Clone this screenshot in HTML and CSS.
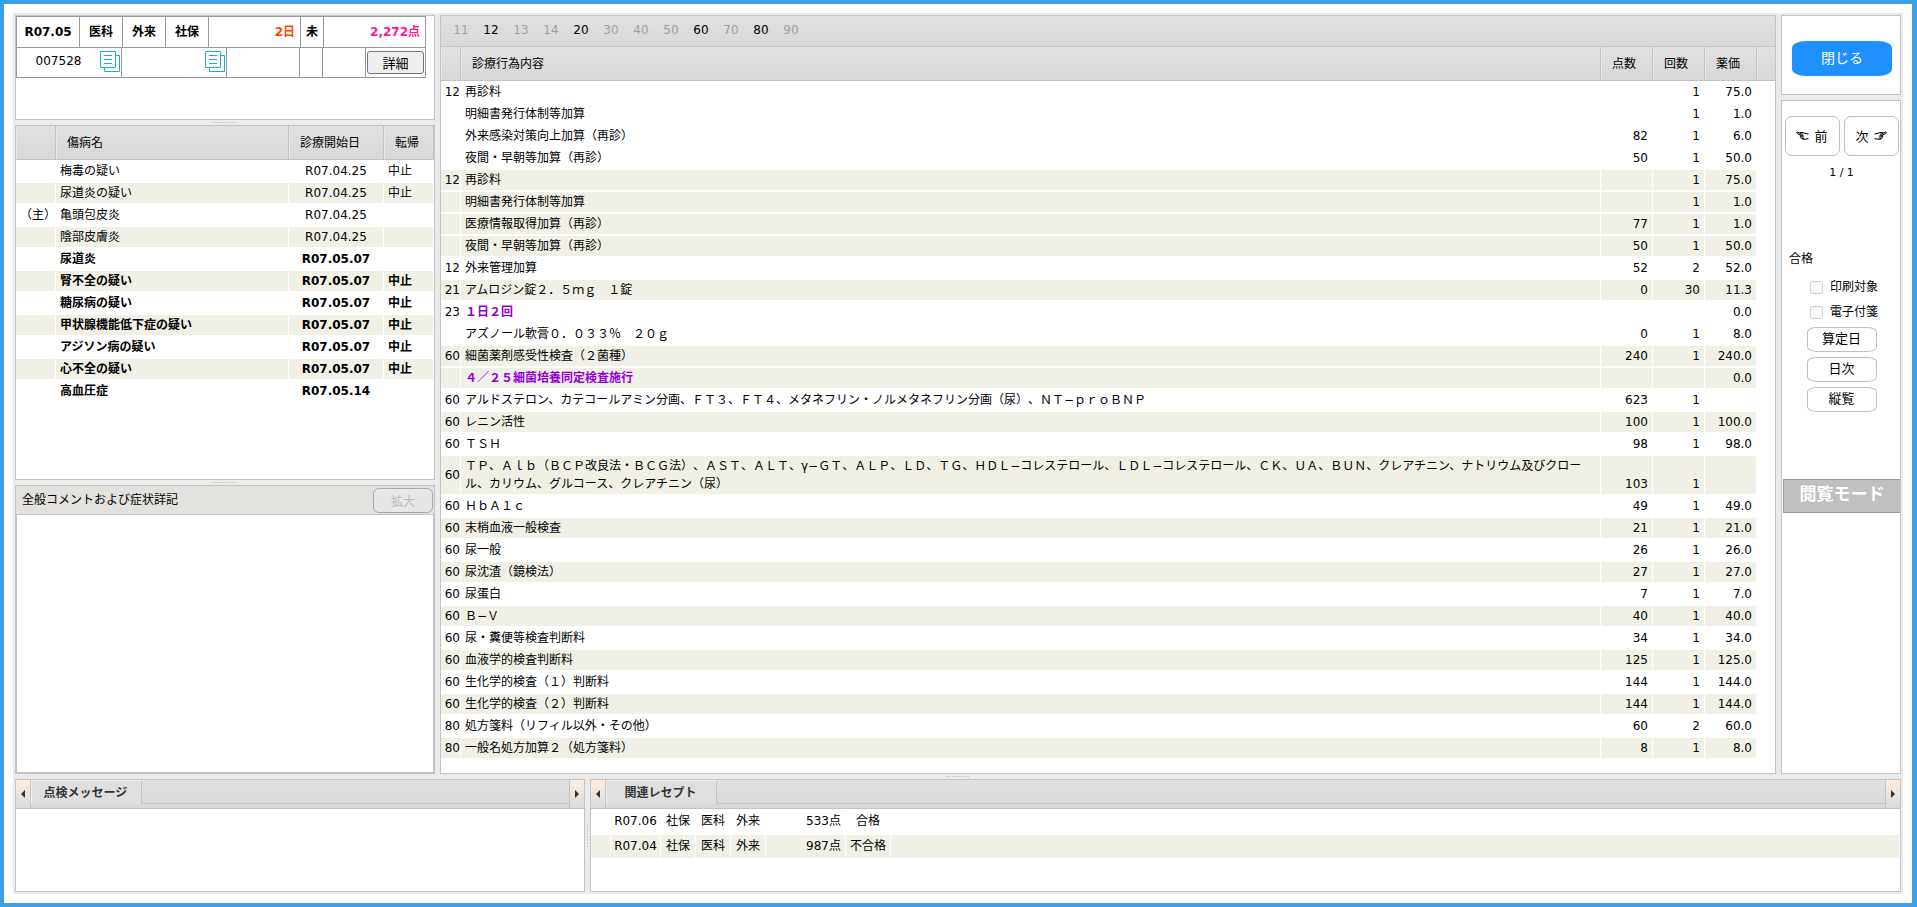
FILE: index.html
```html
<!DOCTYPE html>
<html lang="ja">
<head>
    <meta charset="UTF-8">
    <meta name="viewport" content="width=device-width, initial-scale=1.0">
    <title>レセプト点検</title>
    <link rel="stylesheet" href="styles.css">
</head>
<body>
    <div class="layout">
        <div class="upper">
            <div class="left-column">
                <section class="panel info-panel">
                    <table class="info-table summary">
                        <tr>
                            <td class="w-month">R07.05</td>
                            <td class="w-kind">医科</td>
                            <td class="w-kind">外来</td>
                            <td class="w-kind">社保</td>
                            <td class="days">2日</td>
                            <td class="w-mark">未</td>
                            <td class="points">2,272点</td>
                        </tr>
                    </table>
                    <table class="info-table patient">
                        <tr>
                            <td class="w-id">
                                <div class="copy-cell">
                                    <span class="patient-id">007528</span>
                                    <svg class="copy-icon" viewBox="0 0 20 21" fill="#fff" stroke="#17b1ca">
                                        <path d="M4.5 4.5h15v16h-15z"/>
                                        <path d="M.5.5h15v16H.5z"/>
                                        <path d="M4 4.5h8M4 8.5h8M4 12.5h8"/>
                                    </svg>
                                </div>
                            </td>
                            <td class="w-id">
                                <div class="copy-cell">
                                    <span class="patient-id"></span>
                                    <svg class="copy-icon" viewBox="0 0 20 21" fill="#fff" stroke="#17b1ca">
                                        <path d="M4.5 4.5h15v16h-15z"/>
                                        <path d="M.5.5h15v16H.5z"/>
                                        <path d="M4 4.5h8M4 8.5h8M4 12.5h8"/>
                                    </svg>
                                </div>
                            </td>
                            <td></td>
                            <td class="w-mark"></td>
                            <td class="w-kind"></td>
                            <td class="w-detail"><button type="button" class="detail-button">詳細</button></td>
                        </tr>
                    </table>
                </section>
                <div class="splitter"></div>
                <section class="panel disease-panel">
                    <table class="grid disease">
                        <colgroup>
                            <col class="c-main"><col><col class="c-date"><col class="c-outcome">
                        </colgroup>
                        <thead>
                            <tr><th></th><th>傷病名</th><th>診療開始日</th><th>転帰</th></tr>
                        </thead>
                        <tbody>
                            <tr><td></td><td>梅毒の疑い</td><td>R07.04.25</td><td>中止</td></tr>
                            <tr><td></td><td>尿道炎の疑い</td><td>R07.04.25</td><td>中止</td></tr>
                            <tr><td>（主）</td><td>亀頭包皮炎</td><td>R07.04.25</td><td></td></tr>
                            <tr><td></td><td>陰部皮膚炎</td><td>R07.04.25</td><td></td></tr>
                            <tr class="new"><td></td><td>尿道炎</td><td>R07.05.07</td><td></td></tr>
                            <tr class="new"><td></td><td>腎不全の疑い</td><td>R07.05.07</td><td>中止</td></tr>
                            <tr class="new"><td></td><td>糖尿病の疑い</td><td>R07.05.07</td><td>中止</td></tr>
                            <tr class="new"><td></td><td>甲状腺機能低下症の疑い</td><td>R07.05.07</td><td>中止</td></tr>
                            <tr class="new"><td></td><td>アジソン病の疑い</td><td>R07.05.07</td><td>中止</td></tr>
                            <tr class="new"><td></td><td>心不全の疑い</td><td>R07.05.07</td><td>中止</td></tr>
                            <tr class="new"><td></td><td>高血圧症</td><td>R07.05.14</td><td></td></tr>
                        </tbody>
                    </table>
                </section>
                <div class="splitter"></div>
                <section class="panel comment-panel">
                    <div class="comment-header">
                        <label for="comment">全般コメントおよび症状詳記</label>
                        <button type="button" class="expand-button" disabled>拡大</button>
                    </div>
                    <textarea id="comment" readonly></textarea>
                </section>
            </div>

            <section class="panel main-panel">
                <nav class="codes">
                    <span>11</span>
                    <a href="#c12">12</a>
                    <span>13</span>
                    <span>14</span>
                    <a href="#c20">20</a>
                    <span>30</span>
                    <span>40</span>
                    <span>50</span>
                    <a href="#c60">60</a>
                    <span>70</span>
                    <a href="#c80">80</a>
                    <span>90</span>
                </nav>
                <table class="grid acts">
                    <colgroup>
                        <col class="c-code"><col><col class="c-num"><col class="c-num"><col class="c-num"><col class="c-rest">
                    </colgroup>
                    <thead>
                        <tr><th></th><th>診療行為内容</th><th>点数</th><th>回数</th><th>薬価</th><th></th></tr>
                    </thead>
                    <tbody id="c12">
                        <tr><td>12</td><td>再診料</td><td></td><td>1</td><td>75.0</td></tr>
                        <tr><td></td><td>明細書発行体制等加算</td><td></td><td>1</td><td>1.0</td></tr>
                        <tr><td></td><td>外来感染対策向上加算（再診）</td><td>82</td><td>1</td><td>6.0</td></tr>
                        <tr><td></td><td>夜間・早朝等加算（再診）</td><td>50</td><td>1</td><td>50.0</td></tr>
                    </tbody>
                    <tbody>
                        <tr><td>12</td><td>再診料</td><td></td><td>1</td><td>75.0</td></tr>
                        <tr><td></td><td>明細書発行体制等加算</td><td></td><td>1</td><td>1.0</td></tr>
                        <tr><td></td><td>医療情報取得加算（再診）</td><td>77</td><td>1</td><td>1.0</td></tr>
                        <tr><td></td><td>夜間・早朝等加算（再診）</td><td>50</td><td>1</td><td>50.0</td></tr>
                    </tbody>
                    <tbody>
                        <tr><td>12</td><td>外来管理加算</td><td>52</td><td>2</td><td>52.0</td></tr>
                    </tbody>
                    <tbody id="c20">
                        <tr><td>21</td><td>アムロジン錠２．５ｍｇ　１錠</td><td>0</td><td>30</td><td>11.3</td></tr>
                    </tbody>
                    <tbody>
                        <tr><td>23</td><td class="note">１日２回</td><td></td><td></td><td>0.0</td></tr>
                        <tr><td></td><td>アズノール軟膏０．０３３％　２０ｇ</td><td>0</td><td>1</td><td>8.0</td></tr>
                    </tbody>
                    <tbody id="c60">
                        <tr><td>60</td><td>細菌薬剤感受性検査（２菌種）</td><td>240</td><td>1</td><td>240.0</td></tr>
                        <tr><td></td><td class="note">４／２５細菌培養同定検査施行</td><td></td><td></td><td>0.0</td></tr>
                    </tbody>
                    <tbody>
                        <tr><td>60</td><td>アルドステロン、カテコールアミン分画、ＦＴ３、ＦＴ４、メタネフリン・ノルメタネフリン分画（尿）、ＮＴ−ｐｒｏＢＮＰ</td><td>623</td><td>1</td><td></td></tr>
                    </tbody>
                    <tbody>
                        <tr><td>60</td><td>レニン活性</td><td>100</td><td>1</td><td>100.0</td></tr>
                    </tbody>
                    <tbody>
                        <tr><td>60</td><td>ＴＳＨ</td><td>98</td><td>1</td><td>98.0</td></tr>
                    </tbody>
                    <tbody>
                        <tr><td>60</td><td>ＴＰ、Ａｌｂ（ＢＣＰ改良法・ＢＣＧ法）、ＡＳＴ、ＡＬＴ、γ−ＧＴ、ＡＬＰ、ＬＤ、ＴＧ、ＨＤＬ−コレステロール、ＬＤＬ−コレステロール、ＣＫ、ＵＡ、ＢＵＮ、クレアチニン、ナトリウム及びクロール、カリウム、グルコース、クレアチニン（尿）</td><td>103</td><td>1</td><td></td></tr>
                    </tbody>
                    <tbody>
                        <tr><td>60</td><td>ＨｂＡ１ｃ</td><td>49</td><td>1</td><td>49.0</td></tr>
                    </tbody>
                    <tbody>
                        <tr><td>60</td><td>末梢血液一般検査</td><td>21</td><td>1</td><td>21.0</td></tr>
                    </tbody>
                    <tbody>
                        <tr><td>60</td><td>尿一般</td><td>26</td><td>1</td><td>26.0</td></tr>
                    </tbody>
                    <tbody>
                        <tr><td>60</td><td>尿沈渣（鏡検法）</td><td>27</td><td>1</td><td>27.0</td></tr>
                    </tbody>
                    <tbody>
                        <tr><td>60</td><td>尿蛋白</td><td>7</td><td>1</td><td>7.0</td></tr>
                    </tbody>
                    <tbody>
                        <tr><td>60</td><td>Ｂ−Ｖ</td><td>40</td><td>1</td><td>40.0</td></tr>
                    </tbody>
                    <tbody>
                        <tr><td>60</td><td>尿・糞便等検査判断料</td><td>34</td><td>1</td><td>34.0</td></tr>
                    </tbody>
                    <tbody>
                        <tr><td>60</td><td>血液学的検査判断料</td><td>125</td><td>1</td><td>125.0</td></tr>
                    </tbody>
                    <tbody>
                        <tr><td>60</td><td>生化学的検査（１）判断料</td><td>144</td><td>1</td><td>144.0</td></tr>
                    </tbody>
                    <tbody>
                        <tr><td>60</td><td>生化学的検査（２）判断料</td><td>144</td><td>1</td><td>144.0</td></tr>
                    </tbody>
                    <tbody id="c80">
                        <tr><td>80</td><td>処方箋料（リフィル以外・その他）</td><td>60</td><td>2</td><td>60.0</td></tr>
                    </tbody>
                    <tbody>
                        <tr><td>80</td><td>一般名処方加算２（処方箋料）</td><td>8</td><td>1</td><td>8.0</td></tr>
                    </tbody>
                </table>
            </section>

            <div class="right-column">
                <section class="panel close-panel">
                    <button type="button" class="close-button">閉じる</button>
                </section>
                <section class="panel tool-panel">
                    <div class="pager">
                        <button type="button">
                            <svg class="hand" viewBox="0 0 13 9" fill="none" stroke="#000">
                                <path d="M7 3.4 1.6 1.2C.6 1 .4 2.2 1.2 2.5L5 4.2"/>
                                <path d="M3.6 1.8 7 1.5l3 1.2 2.5.3M5 4.2c-1.4 0-1.4 1.5 0 1.6-.8.8-.1 1.6.8 1.5.2 1 1.2 1.1 2.2 1l4.5-.6"/>
                                <path d="M5 4.3h2.6M5 5.8h2.8M6 7.2h2.2"/>
                            </svg>
                            前
                        </button>
                        <button type="button">
                            次
                            <svg class="hand" viewBox="0 0 13 9" fill="none" stroke="#000">
                                <path d="M6 3.4l5.4-2.2c1-.2 1.2 1 .4 1.3L8 4.2"/>
                                <path d="M9.4 1.8 6 1.5 3 2.7.5 3M8 4.2c1.4 0 1.4 1.5 0 1.6.8.8.1 1.6-.8 1.5-.2 1-1.2 1.1-2.2 1L.5 7.7"/>
                                <path d="M8 4.3H5.4M8 5.8H5.2M7 7.2H4.8"/>
                            </svg>
                        </button>
                    </div>
                    <div class="page-count">1 / 1</div>
                    <div class="status">合格</div>
                    <div class="checks">
                        <label><input type="checkbox" disabled>印刷対象</label>
                        <label><input type="checkbox" disabled>電子付箋</label>
                    </div>
                    <div class="tools">
                        <button type="button">算定日</button>
                        <button type="button">日次</button>
                        <button type="button">縦覧</button>
                    </div>
                    <div class="mode">閲覧モード</div>
                </section>
            </div>
        </div>

        <div class="splitter"></div>

        <div class="lower">
            <section class="panel message-panel">
                <div class="tab-bar">
                    <button type="button" class="scroll prev" aria-label="前のタブ"></button>
                    <div class="tabs"><button type="button" class="tab">点検メッセージ</button></div>
                    <button type="button" class="scroll next" aria-label="次のタブ"></button>
                </div>
            </section>
            <div class="splitter vertical"></div>
            <section class="panel related-panel">
                <div class="tab-bar">
                    <button type="button" class="scroll prev" aria-label="前のタブ"></button>
                    <div class="tabs"><button type="button" class="tab">関連レセプト</button></div>
                    <button type="button" class="scroll next" aria-label="次のタブ"></button>
                </div>
                <table class="grid related">
                    <colgroup>
                        <col class="c-code"><col class="c-month"><col class="c-kind"><col class="c-kind"><col class="c-kind"><col class="c-points"><col class="c-result"><col>
                    </colgroup>
                    <tbody>
                        <tr><td></td><td>R07.06</td><td>社保</td><td>医科</td><td>外来</td><td>533点</td><td>合格</td><td></td></tr>
                        <tr><td></td><td>R07.04</td><td>社保</td><td>医科</td><td>外来</td><td>987点</td><td>不合格</td><td></td></tr>
                    </tbody>
                </table>
            </section>
        </div>
    </div>
</body>
</html>
```

FILE: styles.css
```css
* {
    box-sizing: border-box;
}
body {
    margin: 0;
    height: 100vh;
    padding: 9px;
    border: 4px solid #3d9fe4;
    border-right-width: 5px;
    background-color: #fff;
    color: #000;
    font-family: "DejaVu Sans", "Noto Sans CJK JP", sans-serif;
    font-size: 12px;
    line-height: 18px;
    text-spacing-trim: space-all;
}
button, textarea {
    font-family: inherit;
    font-size: 12px;
    color: #000;
}
button {
    padding: 0;
}
.layout {
    display: flex;
    flex-direction: column;
    height: 100%;
    padding: 2px;
    background-color: #ebebeb;
}
.upper {
    display: flex;
    flex: 1;
    gap: 5px;
    min-height: 0;
}
.lower {
    display: flex;
    flex: 0 0 113px;
}
.panel {
    border: 1px solid #c3c3c3;
    background-color: #fff;
    overflow: hidden;
}
.splitter {
    flex: 0 0 5px;
    display: flex;
    align-items: center;
    justify-content: center;
}
.splitter::before {
    content: "";
    width: 24px;
    height: 1px;
    background: repeating-linear-gradient(90deg, #c8c8c8 0 2px, transparent 2px 3px);
}
.splitter.vertical::before {
    width: 1px;
    height: 24px;
    background: repeating-linear-gradient(#c8c8c8 0 2px, transparent 2px 3px);
}

/* left column */
.left-column {
    display: flex;
    flex-direction: column;
    flex: 0 0 420px;
}
.info-panel {
    flex: 0 0 105px;
}
.disease-panel {
    flex: 0 0 355px;
}
.info-table {
    width: 410px;
    table-layout: fixed;
    border-collapse: collapse;
}
.info-table td {
    height: 31px;
    padding: 0;
    border: 1px solid #999;
    text-align: center;
}
.summary {
    font-weight: bold;
}
.info-table.patient td {
    height: 29px;
    border-top: none;
}
.w-month { width: 63px; }
.w-kind { width: 43px; }
.w-mark { width: 23px; }
.w-id { width: 105px; }
.w-detail { width: 60px; }
.info-table .days {
    width: 92px;
    padding-right: 5px;
    text-align: right;
    color: #ff4500;
}
.info-table .points {
    padding-right: 5px;
    text-align: right;
    color: #ff1493;
}
.copy-cell {
    display: flex;
    align-items: center;
    height: 25px;
    padding-bottom: 2px;
}
.patient-id {
    flex: 1;
}
.copy-icon {
    width: 20px;
    height: 21px;
    margin-right: 1px;
}
.detail-button {
    width: 57px;
    height: 23px;
    border: 1px solid #767676;
    border-radius: 3px;
    background-color: #efefef;
    font-size: 13px;
}

/* data grids */
.grid {
    width: 100%;
    table-layout: fixed;
    border-spacing: 0;
}
.grid th {
    height: 34px;
    padding: 0 11px;
    border-right: 1px solid #c3c3c3;
    border-bottom: 1px solid #c3c3c3;
    background: linear-gradient(#e0e0e0, #d8d8d8);
    box-shadow: inset 1px 0 #e8e8e8;
    font-weight: normal;
    text-align: left;
    white-space: nowrap;
}
.grid td {
    height: 22px;
    padding: 1px 4px;
    border: solid #fff;
    border-width: 1px 1px 1px 0;
    vertical-align: baseline;
}
.disease tr:nth-child(even) td,
.related tr:nth-child(even) td,
.acts tbody:nth-of-type(even) td {
    background-color: #f0f0e7;
}
.disease .c-main { width: 40px; }
.disease .c-date { width: 95px; }
.disease .c-outcome { width: 50px; }
.disease td:nth-child(1) {
    padding: 1px 0 1px 4px;
    text-align: center;
}
.disease td:nth-child(3) {
    padding: 1px 0;
    text-align: center;
}
.disease .new {
    font-weight: bold;
}

.comment-panel {
    display: flex;
    flex-direction: column;
    flex: 1;
}
.comment-header {
    display: flex;
    align-items: center;
    justify-content: space-between;
    height: 28px;
    padding: 0 1px 0 6px;
    background-color: #e2e1dd;
}
.expand-button {
    width: 60px;
    height: 25px;
    border: 1px solid #a8a8a8;
    border-radius: 6px;
    background-color: #e7e7e7;
    color: #b8b8b8;
}
#comment {
    flex: 1;
    border: 1px solid #c3c3c3;
    resize: none;
    outline: none;
}

/* treatment list */
.main-panel {
    flex: 1;
    min-width: 0;
}
.codes {
    display: flex;
    height: 31px;
    padding: 5px 5px 0;
    border-bottom: 1px solid #c3c3c3;
    background: linear-gradient(#e0e0e0, #d8d8d8);
}
.codes span, .codes a {
    width: 30px;
    text-align: center;
    color: #a0a0a0;
    text-decoration: none;
}
.codes a {
    color: #000;
}
.c-code { width: 20px; }
.c-num { width: 52px; }
.c-rest { width: 18px; }
.acts th:last-child {
    border-right: none;
}
.acts td:nth-child(1) {
    padding: 1px 0;
    text-align: right;
    vertical-align: middle;
}
.acts td:nth-child(n+3) {
    text-align: right;
    vertical-align: bottom;
}
.acts .note {
    color: #9400d3;
    font-weight: bold;
}

/* right column */
.right-column {
    display: flex;
    flex-direction: column;
    flex: 0 0 120px;
    gap: 5px;
}
.close-panel {
    flex: 0 0 80px;
    padding: 25px 0 0 2px;
    text-align: center;
}
.close-button {
    width: 100px;
    height: 35px;
    padding-bottom: 3px;
    border: none;
    border-radius: 14px / 7px;
    background-color: #1e90ff;
    color: #fff;
    font-size: 14px;
}
.tool-panel {
    flex: 1;
    padding-left: 1px;
}
.pager {
    display: flex;
    justify-content: center;
    gap: 4px;
    padding-top: 15px;
}
.pager button {
    display: flex;
    align-items: center;
    justify-content: center;
    gap: 5px;
    width: 55px;
    height: 40px;
    padding-bottom: 2px;
    border: 1px solid #c0c0c0;
    border-radius: 7px;
    background-color: #fff;
    font-size: 13px;
}
.hand {
    width: 13px;
    height: 9px;
}
.page-count {
    padding-top: 8px;
    text-align: center;
    font-size: 11px;
}
.status {
    padding: 68px 6px 0;
}
.checks {
    display: flex;
    flex-direction: column;
    gap: 7px;
    padding: 10px 0 0 27px;
}
.checks label {
    display: flex;
    align-items: center;
}
.checks input {
    width: 13px;
    height: 13px;
    margin: 0 7px 0 0;
}
.tools {
    display: flex;
    flex-direction: column;
    align-items: center;
    gap: 5px;
    padding-top: 6px;
}
.tools button {
    width: 70px;
    height: 25px;
    padding-bottom: 4px;
    border: 1px solid #c0c0c0;
    border-radius: 10px / 5px;
    background-color: #fff;
    font-size: 13px;
}
.mode {
    height: 34px;
    margin-top: 67px;
    border: 1px solid #999;
    border-right: none;
    background-color: #c0c0c0;
    color: #fff;
    font-size: 17px;
    font-weight: bold;
    line-height: 28px;
    text-align: center;
}

/* bottom tabs */
.message-panel {
    flex: 0 0 570px;
}
.related-panel {
    flex: 1;
}
.tab-bar {
    display: flex;
    height: 29px;
    border-bottom: 1px solid #c3c3c3;
    background: linear-gradient(#e0e0e0, #d8d8d8);
}
.scroll {
    display: flex;
    align-items: center;
    justify-content: center;
    width: 15px;
    border: none;
    background: linear-gradient(#ffeee0, #dadada);
}
.prev {
    border-right: 1px solid #c3c3c3;
}
.next {
    border-left: 1px solid #c3c3c3;
}
.scroll::before {
    content: "";
    border: 4px solid transparent;
}
.prev::before {
    border-left: none;
    border-right-color: #333;
}
.next::before {
    border-right: none;
    border-left-color: #333;
}
.tabs {
    display: flex;
    flex: 1;
    height: 24px;
}
.tabs::after {
    content: "";
    flex: 1;
    border-bottom: 1px solid #c3c3c3;
}
.tab {
    width: 111px;
    padding: 0 2px 2px 0;
    border: 1px solid #f0f0f0;
    border-right-color: #c3c3c3;
    border-bottom: none;
    background: #dfdfdf;
    color: #333;
    font-weight: bold;
}
.related td {
    height: 25px;
    padding: 2px 0;
    text-align: center;
}
.related td:nth-child(6) {
    padding-right: 4px;
    text-align: right;
}
.c-month { width: 50px; }
.c-kind { width: 35px; }
.c-points { width: 80px; }
.c-result { width: 45px; }
```
